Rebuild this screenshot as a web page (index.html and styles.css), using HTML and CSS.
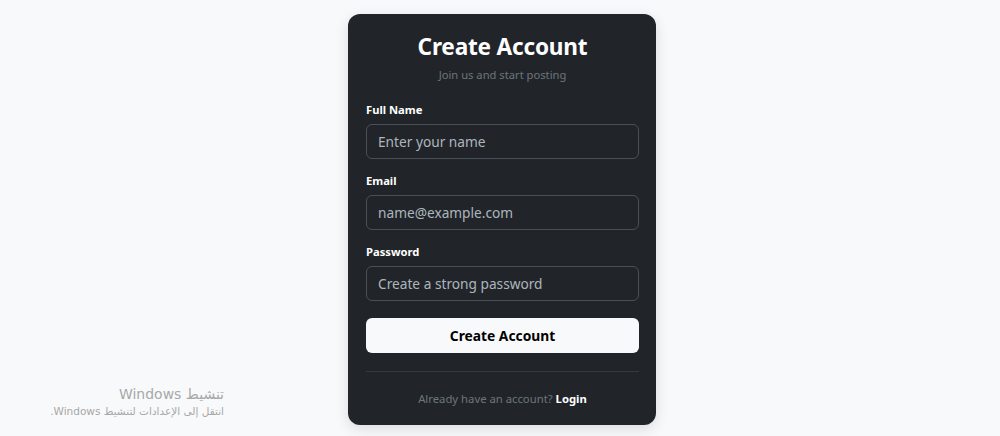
FILE: index.html
```html
<!DOCTYPE html>
<html lang="en">
<head>
<meta charset="utf-8">
<title>Create Account</title>
<link rel="stylesheet" href="styles.css">
</head>
<body>
<main class="page">
  <form class="card">
    <h1 class="title">Create Account</h1>
    <p class="subtitle">Join us and start posting</p>
    <div class="field">
      <label class="label" for="name">Full Name</label>
      <input class="input" id="name" type="text" placeholder="Enter your name">
    </div>
    <div class="field">
      <label class="label" for="email">Email</label>
      <input class="input" id="email" type="email" placeholder="name@example.com">
    </div>
    <div class="field">
      <label class="label" for="password">Password</label>
      <input class="input" id="password" type="password" placeholder="Create a strong password">
    </div>
    <button class="submit" type="button">Create Account</button>
    <hr class="divider">
    <p class="footer">Already have an account? <a class="login" href="#">Login</a></p>
  </form>
</main>
<div class="watermark" dir="rtl">
  <div class="wm-title">تنشيط Windows</div>
  <div class="wm-sub">انتقل إلى الإعدادات لتنشيط Windows.</div>
</div>
</body>
</html>
```
FILE: styles.css
```css
html, body {
  margin: 0;
  padding: 0;
}
body {
  background: #f8f9fa;
  font-family: "Noto Sans", "Open Sans", sans-serif;
  height: 436px;
  overflow: hidden;
}
.page {
  display: flex;
  justify-content: center;
  padding: 14px 0 0 4px;
}
.card {
  width: 308px;
  box-sizing: border-box;
  background: #212529;
  border-radius: 12px;
  padding: 18px 17px 17px 18px;
  box-shadow: 0 4px 14px rgba(0, 0, 0, 0.12);
  display: flex;
  flex-direction: column;
}
.title {
  margin: 0 0 4px;
  font-size: 22.6px;
  line-height: 30px;
  font-weight: 700;
  color: #ffffff;
  text-align: center;
  letter-spacing: -0.2px;
}
.subtitle {
  margin: 0 0 17px;
  font-size: 11.2px;
  line-height: 18px;
  color: #6c757d;
  text-align: center;
}
.field {
  display: flex;
  flex-direction: column;
  margin-bottom: 13px;
}
.label {
  font-size: 11.2px;
  line-height: 18px;
  font-weight: 700;
  color: #ffffff;
  margin-bottom: 5px;
}
.input {
  height: 35px;
  box-sizing: border-box;
  background: #212529;
  border: 1px solid #495057;
  border-radius: 6px;
  padding: 0 11px;
  font-family: inherit;
  font-size: 13.7px;
  color: #dee2e6;
  outline: none;
}
.input::placeholder {
  color: #adb5bd;
}
.submit {
  margin-top: 4px;
  height: 35px;
  border: none;
  border-radius: 6px;
  background: #f8f9fa;
  color: #000000;
  font-family: inherit;
  font-size: 13.8px;
  font-weight: 700;
}
.divider {
  margin: 18px 0 0;
  border: none;
  border-top: 1px solid #343a40;
}
.footer {
  margin: 18px 0 0;
  font-size: 11.3px;
  line-height: 18px;
  color: #6c757d;
  text-align: center;
}
.login {
  color: #ffffff;
  font-weight: 700;
  text-decoration: none;
}
.watermark {
  position: absolute;
  left: 30px;
  width: 194px;
  top: 384px;
  font-family: "DejaVu Sans", sans-serif;
  color: #a8a8a8;
  text-align: right;
}
.wm-title {
  font-size: 14px;
  line-height: 20px;
}
.wm-sub {
  font-size: 10.5px;
  line-height: 14px;
}
```
